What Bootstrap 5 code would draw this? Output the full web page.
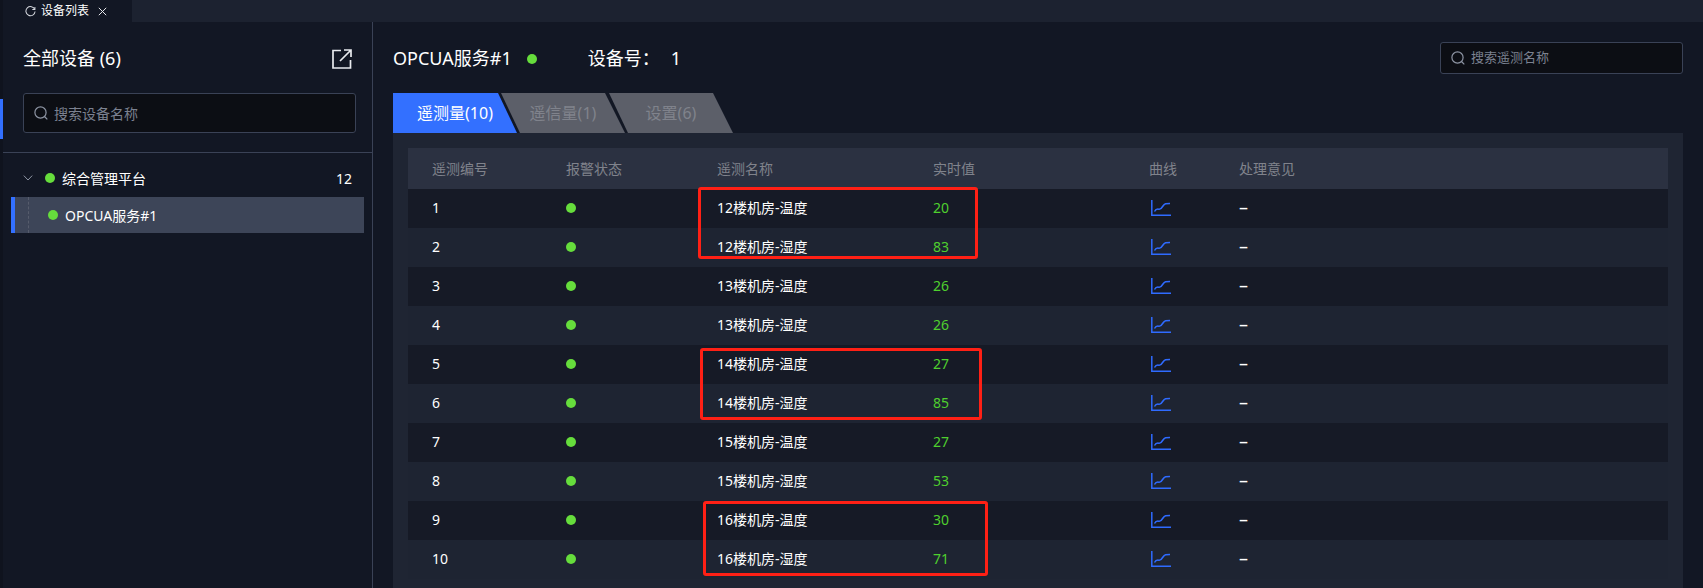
<!DOCTYPE html>
<html lang="zh">
<head>
    <meta charset="UTF-8">
    <title>设备列表</title>
    <link rel="stylesheet" href="https://cdn.jsdelivr.net/npm/bootstrap@5.3.0/dist/css/bootstrap.min.css">
    <script defer src="https://cdn.jsdelivr.net/npm/bootstrap@5.3.0/dist/js/bootstrap.bundle.min.js"></script>
    <style>
        html, body {
            height: 100%;
            overflow: hidden;
        }
        body {
            background: #121724;
            color: #fff;
            font-family: "Noto Sans", "Noto Sans CJK SC", sans-serif;
            font-size: 14px;
        }
        .page-rail {
            width: 3px;
            background: #0f131e;
        }
        .rail-mark {
            height: 40px;
            margin-top: 99px;
            background: #3370ff;
        }
        .page-body {
            min-width: 0;
        }
        .tab-strip {
            height: 22px;
            background: #1c2230;
            font-size: 12px;
        }
        .tab-open {
            width: 129px;
            background: #121724;
            padding-left: 22px;
            gap: 5px;
        }
        .work-area {
            min-height: 0;
        }
        .side-panel {
            width: 370px;
            border-right: 1px solid #3a4256;
        }
        .side-head {
            height: 131px;
            padding: 0 16px 0 20px;
            border-bottom: 1px solid #3a4256;
        }
        .side-title {
            height: 71px;
            padding-top: 2px;
            font-size: 18px;
        }
        .search-box {
            background: #0c0e14;
            border: 1px solid #3a4256;
            border-radius: 3px;
            color: #7b8190;
            gap: 6px;
            padding-left: 10px;
        }
        .search-side {
            height: 40px;
        }
        .search-top {
            width: 243px;
            height: 32px;
            margin-top: -2px;
            font-size: 13px;
        }
        .tree-root {
            height: 44px;
            padding: 6px 20px 0 20px;
        }
        .tree-dot {
            margin: 0 7px 0 12px;
        }
        .tree-node {
            height: 36px;
            margin: 0 8px;
            background: #3d4558;
            border-left: 4px solid #3370ff;
        }
        .tree-guide {
            height: 100%;
            margin: 0 19px 0 13px;
            border-left: 1px dashed #565c6c;
        }
        .node-dot {
            margin-right: 7px;
        }
        .state-dot {
            display: inline-block;
            width: 10px;
            height: 10px;
            border-radius: 50%;
            background: #66dd3c;
            flex: none;
        }
        .main-panel {
            padding: 0 20px;
            min-width: 0;
        }
        .main-head {
            height: 71px;
            padding-top: 2px;
            font-size: 18px;
        }
        .head-dot {
            margin-left: 15px;
        }
        .dev-no {
            margin-left: 51px;
        }
        .dev-no-val {
            margin-left: 11px;
        }
        .tab-row {
            height: 40px;
        }
        .slant-tab {
            height: 40px;
            width: 124px;
            margin-right: -16px;
            font-size: 16px;
            color: #80838c;
            background: #5c5f69;
            clip-path: polygon(0 0, 104px 0, 100% 100%, 19px 100%);
        }
        .slant-tab.tab-active {
            color: #fff;
            background: #3370ff;
            clip-path: polygon(0 0, 105px 0, 100% 100%, 0 100%);
        }
        .data-panel {
            position: relative;
            height: 455px;
            background: #1f2533;
            padding: 15px;
        }
        .data-table {
            --bs-table-bg: transparent;
            --bs-table-color: #fff;
            table-layout: fixed;
            margin: 0;
        }
        .data-table th, .data-table td {
            padding: 0 0 0 24px;
            border: 0;
            vertical-align: middle;
            box-shadow: none;
            height: 39px;
        }
        .data-table td {
            padding-bottom: 2px;
        }
        .data-table th {
            height: 41px;
            font-weight: 400;
            color: #80838c;
            background: #2b3141;
        }
        .data-table tbody tr:nth-child(odd) td {
            background: #161a26;
        }
        .data-table tbody tr:nth-child(even) td {
            background: #1e2432;
        }
        .data-table td.value-cell {
            color: #4fd02e;
        }
        .data-table td.dash-cell {
            font-size: 18px;
            line-height: 1;
            padding-bottom: 3px;
        }
        .cell-dot {
            display: block;
        }
        .curve-icon {
            display: block;
            margin-left: 2px;
        }
        .col-no { width: 134px; }
        .col-alarm { width: 151px; }
        .col-name { width: 216px; }
        .col-value { width: 216px; }
        .col-curve { width: 90px; }
        .note-box {
            position: absolute;
            border: 3px solid #ff2015;
            border-radius: 3px;
            pointer-events: none;
        }
        .note-a { left: 305px; top: 54px; width: 280px; height: 72px; }
        .note-b { left: 307px; top: 215px; width: 282px; height: 72px; }
        .note-c { left: 310px; top: 368px; width: 285px; height: 75px; }
    </style>
</head>
<body class="d-flex">
    <div class="page-rail flex-shrink-0">
        <div class="rail-mark"></div>
    </div>
    <div class="page-body flex-grow-1 d-flex flex-column">
        <div class="tab-strip d-flex flex-shrink-0">
            <div class="tab-open d-flex align-items-center">
                <svg width="11" height="11" viewBox="0 0 12 12" fill="none" stroke="#d5d8de" stroke-width="1.1"><path d="M10.6 3.6A5 5 0 1 0 11 6"/><path d="M10.8 1v2.8H8"/></svg>
                <span>设备列表</span>
                <svg class="ms-1" width="9" height="9" viewBox="0 0 9 9" stroke="#e6e8ec" stroke-width="1"><path d="M.8.8l7.4 7.4M8.2.8L.8 8.2"/></svg>
            </div>
        </div>
        <div class="work-area d-flex flex-grow-1">
            <aside class="side-panel flex-shrink-0">
                <div class="side-head">
                    <div class="side-title d-flex align-items-center justify-content-between">
                        <span>全部设备 (6)</span>
                        <svg class="me-1" width="20" height="20" viewBox="0 0 20 20" fill="none" stroke="#e8eaee" stroke-width="1.7"><path d="M9 1.5H1v17.5h17.5V11"/><path d="M8 12L18.5 1.5M12 1h7v7"/></svg>
                    </div>
                    <div class="search-box search-side d-flex align-items-center">
                        <svg width="14" height="14" viewBox="0 0 14 14" fill="none" stroke="#8d94a3" stroke-width="1.2"><circle cx="6.5" cy="6.5" r="5.6"/><path d="M10.5 10.5l2.8 2.8"/></svg>
                        <span>搜索设备名称</span>
                    </div>
                </div>
                <div class="tree-root d-flex align-items-center">
                    <svg width="10" height="6" viewBox="0 0 10 6" fill="none" stroke="#8d94a3"><path d="M.8.6L5 5l4.2-4.4"/></svg>
                    <span class="state-dot tree-dot"></span>
                    <span class="flex-grow-1">综合管理平台</span>
                    <span>12</span>
                </div>
                <div class="tree-node d-flex align-items-center">
                    <span class="tree-guide"></span>
                    <span class="state-dot node-dot"></span>
                    <span>OPCUA服务#1</span>
                </div>
            </aside>
            <main class="main-panel flex-grow-1">
                <div class="main-head d-flex align-items-center">
                    <span>OPCUA服务#1</span>
                    <span class="state-dot head-dot"></span>
                    <span class="dev-no">设备号：</span>
                    <span class="dev-no-val">1</span>
                    <div class="search-box search-top d-flex align-items-center ms-auto">
                        <svg width="14" height="14" viewBox="0 0 14 14" fill="none" stroke="#8d94a3" stroke-width="1.2"><circle cx="6.5" cy="6.5" r="5.6"/><path d="M10.5 10.5l2.8 2.8"/></svg>
                        <span>搜索遥测名称</span>
                    </div>
                </div>
                <div class="tab-row d-flex">
                    <div class="slant-tab tab-active d-flex align-items-center justify-content-center">遥测量(10)</div>
                    <div class="slant-tab d-flex align-items-center justify-content-center">遥信量(1)</div>
                    <div class="slant-tab d-flex align-items-center justify-content-center">设置(6)</div>
                </div>
                <div class="data-panel">
                    <table class="table data-table" id="dataTable">
                        <thead>
                            <tr>
                                <th class="col-no">遥测编号</th>
                                <th class="col-alarm">报警状态</th>
                                <th class="col-name">遥测名称</th>
                                <th class="col-value">实时值</th>
                                <th class="col-curve">曲线</th>
                                <th>处理意见</th>
                            </tr>
                        </thead>
                        <tbody></tbody>
                    </table>
                    <div class="note-box note-a"></div>
                    <div class="note-box note-b"></div>
                    <div class="note-box note-c"></div>
                </div>
            </main>
        </div>
    </div>
    <script>
        const rows = [
            ["12楼机房-温度", 20], ["12楼机房-湿度", 83],
            ["13楼机房-温度", 26], ["13楼机房-湿度", 26],
            ["14楼机房-温度", 27], ["14楼机房-湿度", 85],
            ["15楼机房-温度", 27], ["15楼机房-湿度", 53],
            ["16楼机房-温度", 30], ["16楼机房-湿度", 71]
        ];
        const curve = '<svg class="curve-icon" width="20" height="16" viewBox="0 0 20 16" fill="none" stroke="#2f6bff" stroke-width="1.5"><path d="M.8 0v15.2H20"/><path d="M3.5 11.5C5 8.5 6.5 9 8 9.2S10.5 8.5 12 6s3-2.5 7-2.5"/></svg>';
        document.querySelector("#dataTable tbody").innerHTML = rows.map((r, i) =>
            `<tr><td>${i + 1}</td><td><span class="state-dot cell-dot"></span></td><td>${r[0]}</td><td class="value-cell">${r[1]}</td><td>${curve}</td><td class="dash-cell">–</td></tr>`
        ).join("");
    </script>
</body>
</html>
